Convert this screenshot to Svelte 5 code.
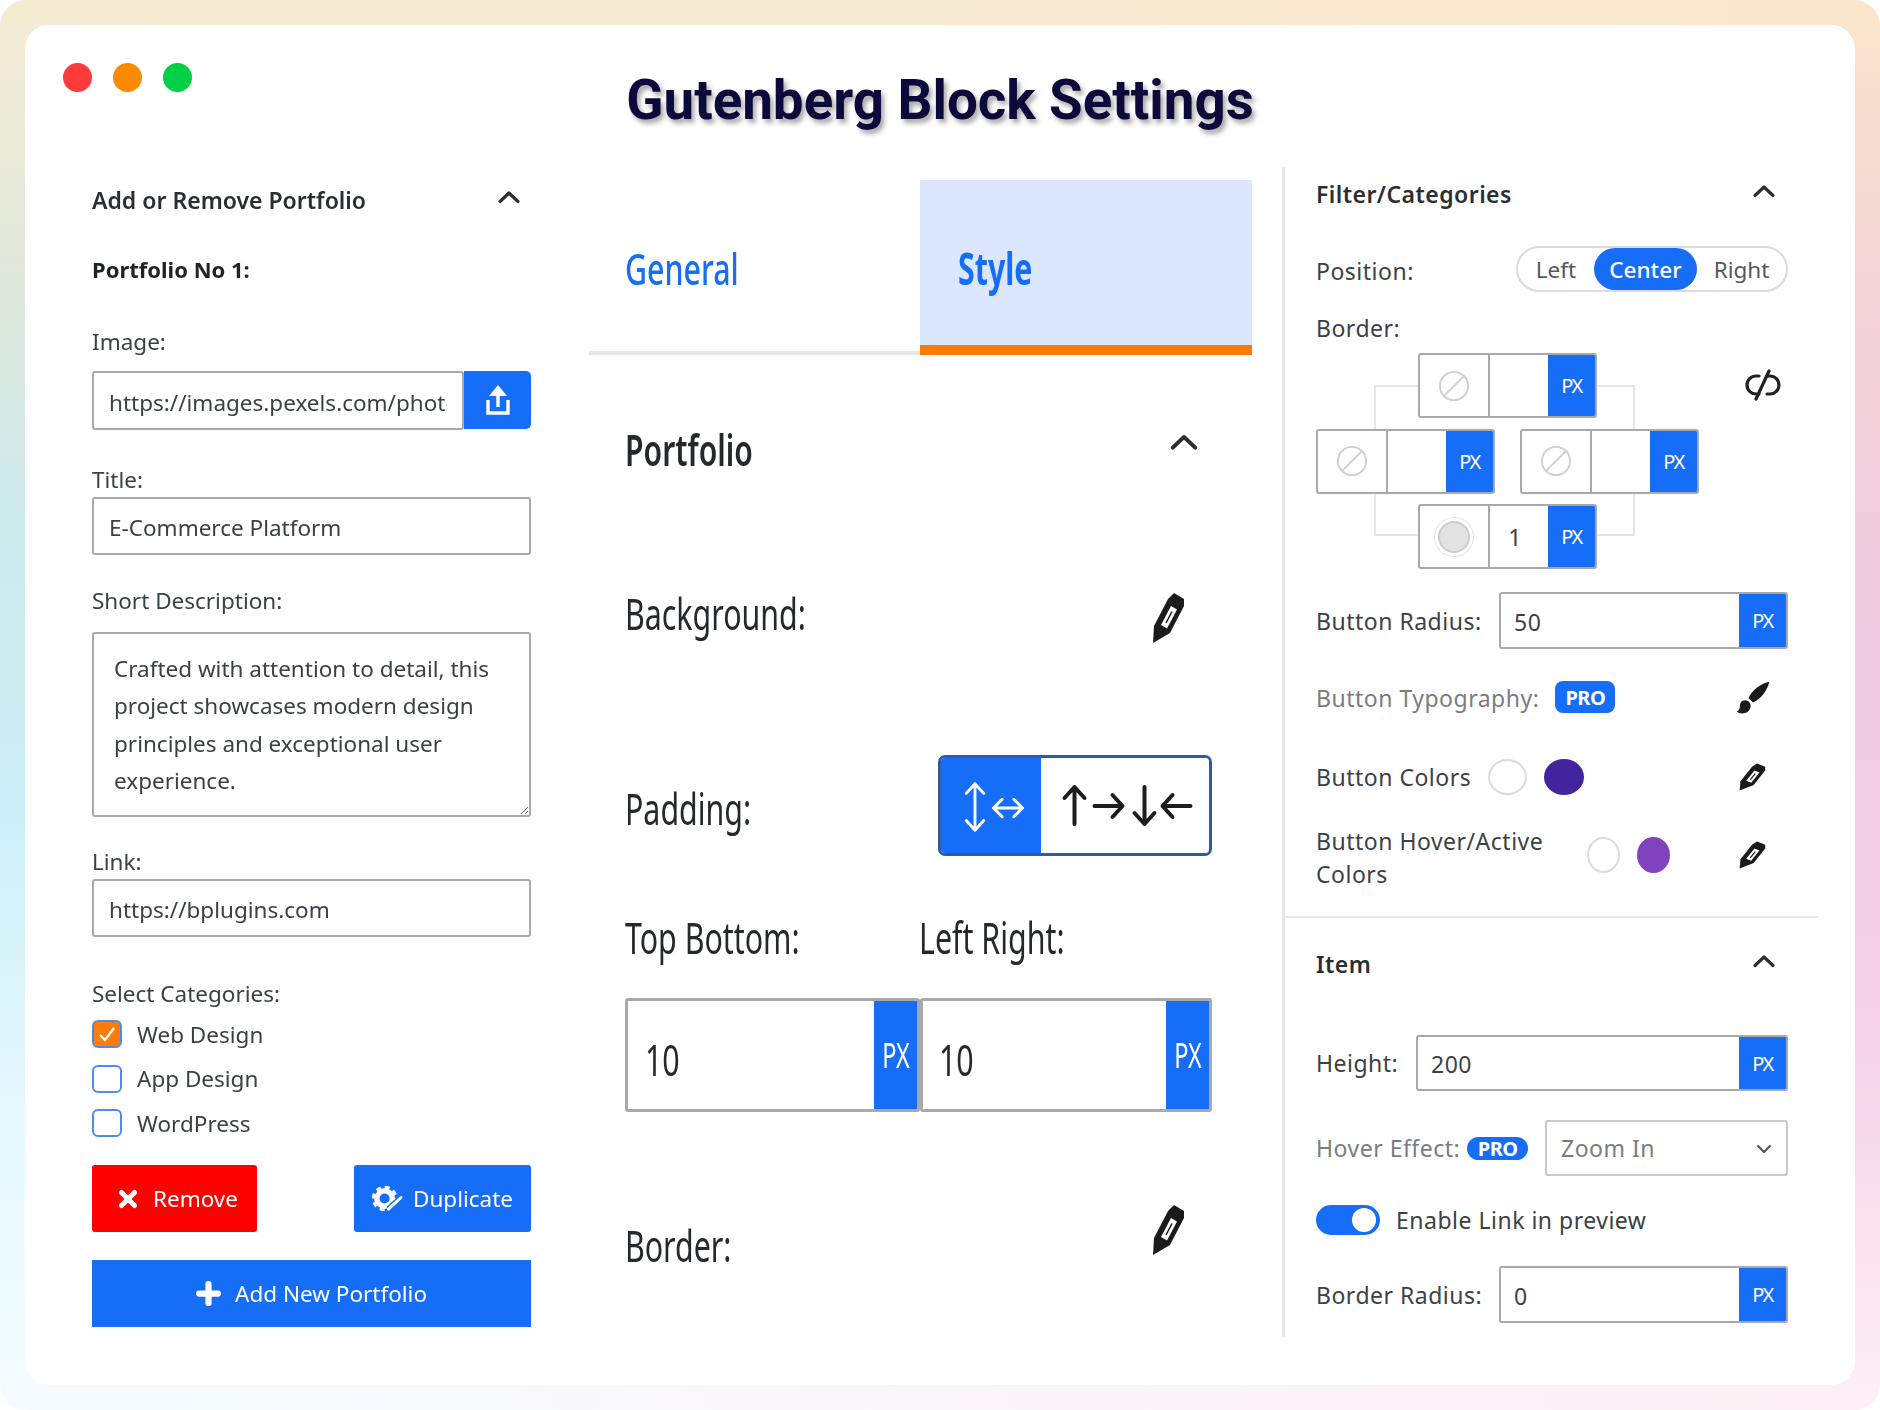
<script>
  const categories = [
    { name: 'Web Design', checked: true },
    { name: 'App Design', checked: false },
    { name: 'WordPress', checked: false }
  ];

  const description =
    'Crafted with attention to detail, this project showcases modern design principles and exceptional user experience.';
</script>

{#snippet chevron(cls)}
  <svg class={cls} viewBox="0 0 24 14" fill="none" stroke="currentColor" stroke-width="3.2" stroke-linecap="round" stroke-linejoin="round">
    <polyline points="3,11.5 12,3 21,11.5" />
  </svg>
{/snippet}

{#snippet pencil(cls)}
  <svg class={cls} viewBox="0 0 34 52" preserveAspectRatio="none">
    <path d="M2 51 L3 34 L17 7 L23 1 L33 7 L33 14 L19 41 Z" fill="#1b1b1b" />
    <path d="M10 33 L20 14 L26 17.500 L16 36.500 Z" fill="#fff" />
    <path d="M15 31 L21 19.500" stroke="#1b1b1b" stroke-width="1.500" />
  </svg>
{/snippet}

{#snippet unitInput(value, cls)}
  <div class="unit-input {cls}">
    <input type="text" {value} />
    <span class="unit">PX</span>
  </div>
{/snippet}

{#snippet borderSide(value, active)}
  <div class="side">
    <span class="side__swatch">
      {#if active}
        <span class="side__dot"></span>
      {:else}
        <svg viewBox="0 0 34 34" fill="none" stroke="#cfcfcf" stroke-width="2">
          <circle cx="17" cy="17" r="15" />
          <line x1="7" y1="27" x2="27" y2="7" />
        </svg>
      {/if}
    </span>
    <span class="side__value">{value}</span>
    <span class="side__unit">PX</span>
  </div>
{/snippet}

<div class="frame">
  <div class="card">
    <header class="titlebar">
      <div class="dots">
        <span class="dot dot--red"></span>
        <span class="dot dot--orange"></span>
        <span class="dot dot--green"></span>
      </div>
      <h1>Gutenberg Block Settings</h1>
    </header>

    <div class="columns">
      <section class="left">
        <div class="left__head">
          <h2>Add or Remove Portfolio</h2>
          {@render chevron('chev')}
        </div>
        <div class="left__sub">Portfolio No 1:</div>

        <label class="label label--image" for="image">Image:</label>
        <div class="image-row">
          <input id="image" type="text" value="https://images.pexels.com/photos/3184291" />
          <button class="upload" aria-label="Upload">
            <svg viewBox="0 0 26 32" fill="none" stroke="#fff" stroke-width="3.400">
              <path d="M13 3 L13 23" />
              <path d="M13 1 L22 12 L4 12 Z" fill="#fff" stroke="none" />
              <path d="M3 16 L3 29 L23 29 L23 16" />
            </svg>
          </button>
        </div>

        <label class="label label--title" for="title">Title:</label>
        <input id="title" class="text" type="text" value="E-Commerce Platform" />

        <label class="label label--desc" for="desc">Short Description:</label>
        <textarea id="desc" value={description}></textarea>

        <label class="label label--link" for="link">Link:</label>
        <input id="link" class="text" type="text" value="https://bplugins.com" />

        <div class="label label--cats">Select Categories:</div>
        <ul class="cats">
          {#each categories as cat}
            <li>
              <span class="check" class:check--on={cat.checked}>
                {#if cat.checked}
                  <svg viewBox="0 0 24 24" fill="none" stroke="#fff" stroke-width="2.400">
                    <polyline points="5,13 10,18 19,6" />
                  </svg>
                {/if}
              </span>
              {cat.name}
            </li>
          {/each}
        </ul>

        <div class="actions">
          <button class="btn btn--remove">
            <svg viewBox="0 0 20 20" stroke="#fff" stroke-width="5" stroke-linecap="round">
              <line x1="3.500" y1="3.500" x2="16.500" y2="16.500" />
              <line x1="16.500" y1="3.500" x2="3.500" y2="16.500" />
            </svg>
            Remove
          </button>
          <button class="btn btn--duplicate">
            <svg viewBox="0 0 32 30" fill="none" stroke="#fff">
              <circle cx="13" cy="15" r="8" stroke-width="5.500" />
              <circle cx="13" cy="15" r="11.500" stroke-width="3.500" stroke-dasharray="5 4" />
              <line x1="17" y1="26" x2="30" y2="14" stroke="#166df7" stroke-width="6" />
              <line x1="17" y1="26" x2="30" y2="14" stroke-width="3" stroke-linecap="round" />
            </svg>
            Duplicate
          </button>
        </div>

        <button class="btn btn--add">
          <svg viewBox="0 0 24 24" stroke="#fff" stroke-width="6" stroke-linecap="round">
            <line x1="12" y1="3" x2="12" y2="21" />
            <line x1="3" y1="12" x2="21" y2="12" />
          </svg>
          Add New Portfolio
        </button>
      </section>

      <section class="middle">
        <div class="tabs">
          <div class="tab"><span class="tall tall--tab">General</span></div>
          <div class="tab tab--active"><span class="tall tall--tab tall--bold">Style</span></div>
        </div>

        <div class="middle__body">
          <div class="mrow mrow--portfolio">
            <span class="tall tall--head">Portfolio</span>
            {@render chevron('chev chev--lg')}
          </div>

          <div class="mrow mrow--background">
            <span class="tall">Background:</span>
            {@render pencil('pencil pencil--lg pencil--down')}
          </div>

          <div class="mrow mrow--padding">
            <span class="tall tall--padding">Padding:</span>
            <div class="sides-toggle">
              <span class="sides-toggle__all">
                <svg viewBox="0 0 103 95" fill="none" stroke="#fff" stroke-width="3" stroke-linecap="round" stroke-linejoin="round">
                  <path d="M35 25 V73 M26 35 L35 25 L44 35 M26 63 L35 73 L44 63" />
                  <path d="M54 50 H84 M63 41 L54 50 L63 59 M75 41 L84 50 L75 59" />
                </svg>
              </span>
              <span class="sides-toggle__each">
                <svg viewBox="0 0 165 95" fill="none" stroke="#1d1d1d" stroke-width="4" stroke-linecap="round" stroke-linejoin="round">
                  <path d="M32 66 V29 M22 40 L32 29 L42 40" />
                  <path d="M52 48 H80 M70 37 L80 48 L70 59" />
                  <path d="M102 29 V66 M92 55 L102 66 L112 55" />
                  <path d="M148 48 H120 M130 37 L120 48 L130 59" />
                </svg>
              </span>
            </div>
          </div>

          <div class="pad-labels">
            <span class="tall">Top Bottom:</span>
            <span class="tall">Left Right:</span>
          </div>

          <div class="pad-inputs">
            <div class="pad-input">
              <span class="tall tall--value">10</span>
              <span class="pad-input__unit"><span class="tall tall--unit">PX</span></span>
            </div>
            <div class="pad-input">
              <span class="tall tall--value">10</span>
              <span class="pad-input__unit"><span class="tall tall--unit">PX</span></span>
            </div>
          </div>

          <div class="mrow mrow--border">
            <span class="tall">Border:</span>
            {@render pencil('pencil pencil--lg pencil--up')}
          </div>
        </div>
      </section>

      <section class="right">
        <div class="panel panel--filter">
          <div class="panel__head">
            <h2>Filter/Categories</h2>
            {@render chevron('chev')}
          </div>

          <div class="row row--position">
            <span class="row--position__label">Position:</span>
            <div class="pill">
              <span class="pill__item pill__item--left">Left</span>
              <span class="pill__item pill__item--center">Center</span>
              <span class="pill__item pill__item--right">Right</span>
            </div>
          </div>

          <div class="border-label">Border:</div>
          <div class="border-row">
            <div class="border-grid">
              <div class="border-grid__lines"></div>
              <div class="border-grid__row">{@render borderSide('', false)}</div>
              <div class="border-grid__row border-grid__row--split">
                {@render borderSide('', false)}
                {@render borderSide('', false)}
              </div>
              <div class="border-grid__row">{@render borderSide('1', true)}</div>
            </div>
            <svg class="unlink" viewBox="0 0 36 32" fill="none" stroke="#222" stroke-width="3.200" stroke-linecap="round">
              <path d="M14 7 H11 A9 9 0 0 0 11 25 H14" />
              <path d="M22 7 H25 A9 9 0 0 1 25 25 H22" />
              <line x1="11" y1="30" x2="24" y2="2" />
            </svg>
          </div>

          <div class="row row--radius">
            <span>Button Radius:</span>
            {@render unitInput('50', 'w-289')}
          </div>

          <div class="row row--typo">
            <span class="muted">Button Typography:</span>
            <span class="pro">PRO</span>
            <svg class="brush" viewBox="0 0 24 24" fill="#1b1b1b">
              <path d="M23.500 0.500 C18 1.500 11 6.500 8.800 12 L12 15.200 C17.500 13 22.500 6 23.500 0.500 Z" />
              <path d="M6.500 13.500 C3.800 13.500 2.800 15.500 2.800 17.500 C2.800 19.500 2 21 0.500 21.500 C3 23.800 9 23.500 10.300 18.500 C10.800 16 9 13.500 6.500 13.500 Z" />
            </svg>
          </div>

          <div class="row row--colors">
            <span>Button Colors</span>
            <span class="swatch swatch--white"></span>
            <span class="swatch swatch--indigo"></span>
            {@render pencil('pencil pencil--sm')}
          </div>

          <div class="row row--hover">
            <span class="row--hover__label">Button Hover/Active Colors</span>
            <span class="swatch swatch--white swatch--small"></span>
            <span class="swatch swatch--purple swatch--small"></span>
            {@render pencil('pencil pencil--sm')}
          </div>
        </div>

        <div class="panel panel--item">
          <div class="panel__head">
            <h2>Item</h2>
            {@render chevron('chev')}
          </div>

          <div class="row row--height">
            <span>Height:</span>
            {@render unitInput('200', 'w-372')}
          </div>

          <div class="row row--effect">
            <span class="muted">Hover Effect:</span>
            <span class="pro pro--round">PRO</span>
            <div class="select">
              <select>
                <option>Zoom In</option>
              </select>
              <svg viewBox="0 0 16 10" fill="none" stroke="#555" stroke-width="2.200" stroke-linecap="round" stroke-linejoin="round">
                <polyline points="2,2 8,8 14,2" />
              </svg>
            </div>
          </div>

          <div class="row row--switch">
            <span class="switch"><span class="switch__knob"></span></span>
            <span>Enable Link in preview</span>
          </div>

          <div class="row row--bradius">
            <span>Border Radius:</span>
            {@render unitInput('0', 'w-289')}
          </div>
        </div>
      </section>
    </div>
  </div>
</div>

<style>
  :global(body) {
    margin: 0;
    background: #fff;
  }

  .frame {
    width: 1880px;
    height: 1410px;
    box-sizing: border-box;
    padding: 25px;
    border-radius: 26px;
    font-family: "Noto Sans", "Open Sans", sans-serif;
    font-size: 22.5px;
    color: #3c4146;
    background-color: #f4f0f0;
    background-image:
      linear-gradient(90deg, #f4ebd3, #f6e9d2 50%, #fbe6cd),
      linear-gradient(90deg, #f4fcff, #fbf6fa 50%, #fdeff5),
      linear-gradient(180deg, #f4ebd3 0%, #dfe9de 22%, #cdeaec 36%, #cdf0f8 58%, #e6f9fe 80%, #f4fcff 100%),
      linear-gradient(180deg, #fbe6cd 0%, #f2d3d8 22%, #f0cce0 44%, #f4d0e6 70%, #fdeff5 100%);
    background-size: 100% 25px, 100% 25px, 50% 100%, 50% 100%;
    background-position: top, bottom, left, right;
    background-repeat: no-repeat;
  }

  .card {
    height: 100%;
    box-sizing: border-box;
    background: #fff;
    border-radius: 24px;
    padding: 0 37px 0 67px;
  }

  .titlebar {
    height: 142px;
    display: grid;
    grid-template-columns: 1fr auto 1fr;
    margin-left: -67px;
    margin-right: -37px;
  }

  .dots {
    display: flex;
    gap: 21px;
    padding: 38px 0 0 38px;
  }

  .dot {
    width: 29px;
    height: 29px;
    border-radius: 50%;
  }

  .dot--red { background: #ff3b3b; }
  .dot--orange { background: #ff8a00; }
  .dot--green { background: #00cf47; }

  h1 {
    margin: 40px 0 0;
    font-family: Roboto, sans-serif;
    font-size: 54.700px;
    line-height: 70px;
    font-weight: 700;
    color: #0b0a3a;
    text-shadow: 3px 4px 5px rgba(0, 0, 0, 0.35);
    white-space: nowrap;
  }

  h2 {
    margin: 0;
    font-size: 23px;
    font-weight: 600;
    color: #2b2f33;
  }

  .columns {
    display: grid;
    grid-template-columns: 439px 663px 535px;
    column-gap: 58px;
  }

  .chev {
    width: 24px;
    height: 14px;
    color: #2b2f33;
  }

  /* left column */
  .left__head {
    height: 66px;
    display: flex;
    align-items: center;
    justify-content: space-between;
    padding: 0 10px 0 0;
  }

  .left__head .chev {
    margin-bottom: 7px;
  }

  .left__sub {
    margin-top: 21px;
    margin-bottom: 1px;
    line-height: 30px;
    font-size: 22px;
    font-weight: 700;
    color: #1f2326;
  }

  .label {
    display: block;
    line-height: 30px;
  }

  .label--image { margin-top: 43px; margin-bottom: 14px; }
  .label--title { margin-top: 35px; margin-bottom: 2px; }
  .label--desc { margin-top: 31px; margin-bottom: 16px; }
  .label--link { margin-top: 30px; margin-bottom: 2px; }
  .label--cats { margin-top: 42px; margin-bottom: 3px; }

  input,
  textarea,
  select {
    font-family: inherit;
    font-size: inherit;
    letter-spacing: inherit;
    color: #3c4146;
    outline: none;
    background: #fff;
  }

  .text {
    width: 100%;
    height: 58px;
    box-sizing: border-box;
    padding: 3px 15px 0;
    border: 2px solid #a9a9a9;
    border-radius: 3px;
  }

  .image-row {
    display: flex;
    height: 59px;
  }

  .image-row input {
    width: 372px;
    box-sizing: border-box;
    padding: 3px 15px 0;
    border: 2px solid #a9a9a9;
    border-radius: 3px;
  }

  .upload {
    width: 67px;
    height: 58px;
    border: 0;
    padding: 0;
    border-radius: 0 5px 5px 0;
    background: #166df7;
    display: flex;
    align-items: center;
    justify-content: center;
  }

  .upload svg {
    width: 26px;
    height: 32px;
  }

  textarea {
    display: block;
    width: 100%;
    height: 185px;
    box-sizing: border-box;
    padding: 16px 20px;
    line-height: 37.4px;
    border: 2px solid #a9a9a9;
    border-radius: 3px;
  }

  .cats {
    list-style: none;
    margin: 0;
    padding: 0;
  }

  .cats li {
    height: 44.5px;
    display: flex;
    align-items: center;
    gap: 15px;
  }

  .check {
    width: 30px;
    height: 28px;
    box-sizing: border-box;
    border: 2px solid #4d8bf0;
    border-radius: 6px;
    background: #fff;
  }

  .check svg {
    display: block;
    width: 100%;
    height: 100%;
  }

  .check--on {
    background: #ff7c0a;
  }

  .actions {
    margin-top: 19.500px;
    display: flex;
    justify-content: space-between;
  }

  .btn {
    height: 67px;
    border: 0;
    border-radius: 3px;
    padding: 0;
    font-family: inherit;
    font-size: inherit;
    color: #fff;
    display: flex;
    align-items: center;
    justify-content: center;
  }

  .btn--remove {
    width: 165px;
    gap: 15px;
    padding-left: 7px;
    background: #ff0000;
  }

  .btn--remove svg {
    width: 20px;
    height: 20px;
  }

  .btn--duplicate {
    width: 177px;
    gap: 10px;
    background: #166df7;
  }

  .btn--duplicate svg {
    width: 31px;
    height: 29px;
  }

  .btn--add {
    width: 100%;
    height: 67px;
    margin-top: 28px;
    gap: 14px;
    border-radius: 0;
    background: #166df7;
  }

  .btn--add svg {
    width: 25px;
    height: 25px;
  }

  /* middle column, the source is a stretched screenshot so its text runs narrow */
  .middle {
    padding-top: 13px;
  }

  .tall {
    display: inline-block;
    font-size: 44px;
    line-height: 60px;
    color: #26292c;
    white-space: nowrap;
    transform: scaleX(0.69);
    transform-origin: left center;
  }

  .tall--tab {
    color: #166df7;
    font-weight: 500;
  }

  .tall--bold {
    font-weight: 700;
  }

  .tall--head {
    font-weight: 600;
    transform: scaleX(0.685);
  }

  .tall--padding {
    margin-top: 4px;
  }

  .tall--value {
    font-size: 44px;
  }

  .tall--unit {
    font-size: 34px;
    color: #fff;
    transform-origin: center;
  }

  .tabs {
    display: grid;
    grid-template-columns: 331px 332px;
    height: 175px;
  }

  .tab {
    box-sizing: border-box;
    padding: 58px 0 0 36px;
    border-bottom: 4px solid #e6e6e6;
  }

  .tab--active {
    padding-left: 38px;
    background: #dbe7fd;
    border-bottom: 10px solid #ff7c00;
  }

  .middle__body {
    padding: 0 40px 0 36px;
  }

  .mrow {
    height: 60px;
    display: flex;
    align-items: center;
    justify-content: space-between;
  }

  .mrow--portfolio { margin-top: 64px; padding-right: 13px; }
  .mrow--background { margin-top: 104px; padding-right: 27px; }
  .mrow--padding { margin-top: 112px; height: 101px; }
  .mrow--border { margin-top: 103px; padding-right: 27px; }

  .chev--lg {
    width: 30px;
    height: 18px;
    margin-bottom: 14px;
  }

  .pencil--lg {
    width: 34px;
    height: 52px;
  }

  .pencil--down { margin-top: 10px; }
  .pencil--up { margin-bottom: 30px; }

  .pencil--sm {
    width: 28px;
    height: 28px;
  }

  .sides-toggle {
    width: 274px;
    height: 101px;
    box-sizing: border-box;
    display: flex;
    border: 3px solid #2b5da6;
    border-radius: 7px;
    overflow: hidden;
  }

  .sides-toggle__all {
    width: 100px;
    background: #166df7;
  }

  .sides-toggle__each {
    flex: 1;
    background: #fff;
  }

  .sides-toggle svg {
    display: block;
    width: 100%;
    height: 100%;
  }

  .pad-labels {
    margin-top: 51px;
    display: grid;
    grid-template-columns: 294px 1fr;
  }

  .pad-inputs {
    margin-top: 31px;
    display: grid;
    grid-template-columns: 295px 292px;
    height: 114px;
  }

  .pad-input {
    box-sizing: border-box;
    display: flex;
    justify-content: space-between;
    align-items: center;
    padding-left: 17px;
    border: 3px solid #a9a9a9;
    border-radius: 3px;
  }

  .pad-input + .pad-input {
    padding-left: 16px;
  }

  .pad-input .tall--value {
    margin-top: 7px;
  }

  .pad-input__unit {
    width: 43px;
    height: 100%;
    display: flex;
    align-items: center;
    justify-content: center;
    background: #166df7;
  }

  /* right column */
  .right {
    border-left: 3px solid #e8e8e8;
    height: 1170px;
    margin-left: -28px;
    width: 536px;
    box-sizing: border-box;
    font-size: 23px;
    letter-spacing: 0.5px;
  }

  .panel {
    padding: 0 30px 0 31px;
  }

  .panel--filter {
    padding-top: 12px;
    padding-bottom: 25px;
    border-bottom: 2px solid #e8e8e8;
  }

  .panel--item {
    padding-top: 31px;
  }

  .panel__head {
    height: 30px;
    display: flex;
    align-items: center;
    justify-content: space-between;
    padding-right: 12px;
  }

  .panel__head h2 {
    font-size: 23px;
    letter-spacing: 0.45px;
  }

  .panel__head .chev {
    margin-bottom: 7px;
  }

  .row {
    display: flex;
    align-items: center;
    justify-content: space-between;
  }

  .row--position { margin-top: 37px; height: 46px; }

  .row--position__label {
    padding-top: 3px;
  }

  .pill {
    width: 272px;
    height: 46px;
    box-sizing: border-box;
    display: flex;
    border: 2px solid #dcdcdc;
    border-radius: 23px;
    font-size: 22.5px;
    letter-spacing: 0;
  }

  .pill__item {
    display: flex;
    align-items: center;
    justify-content: center;
    border-radius: 21px;
    color: #55595d;
  }

  .pill__item--left { width: 76px; }
  .pill__item--center { width: 103px; background: #166df7; color: #fff; font-weight: 500; }
  .pill__item--right { width: 89px; }

  .border-label {
    margin-top: 21px;
    line-height: 30px;
  }

  .border-row {
    margin-top: 10px;
    display: flex;
    justify-content: space-between;
    align-items: flex-start;
    padding-right: 7px;
  }

  .border-grid {
    position: relative;
    width: 383px;
    height: 216px;
    display: flex;
    flex-direction: column;
    justify-content: space-between;
  }

  .border-grid__lines {
    position: absolute;
    left: 58px;
    right: 64px;
    top: 32px;
    bottom: 33px;
    border: 2px solid #e6e6e6;
  }

  .border-grid__row {
    position: relative;
    display: flex;
    justify-content: center;
  }

  .border-grid__row--split {
    justify-content: space-between;
  }

  .side {
    width: 179px;
    height: 65px;
    box-sizing: border-box;
    display: flex;
    background: #fff;
    border: 2px solid #a9a9a9;
    border-radius: 3px;
    overflow: hidden;
  }

  .side__swatch {
    width: 70px;
    box-sizing: border-box;
    display: flex;
    align-items: center;
    justify-content: center;
    border-right: 2px solid #a9a9a9;
  }

  .side__swatch svg {
    width: 32px;
    height: 32px;
  }

  .side__dot {
    width: 28px;
    height: 28px;
    border-radius: 50%;
    background: #e3e3e3;
    border: 2px solid #ccc;
    box-shadow: 0 0 0 3px #fff, 0 0 0 4px #e4e4e4;
  }

  .side__value {
    flex: 1;
    display: flex;
    align-items: center;
    justify-content: center;
    padding-right: 8px;
  }

  .side__unit {
    width: 47px;
    display: flex;
    align-items: center;
    justify-content: center;
    background: #166df7;
    color: #fff;
    font-size: 20px;
    letter-spacing: -1.5px;
  }

  .unlink {
    width: 36px;
    height: 32px;
    margin-top: 16px;
  }

  .row--radius { margin-top: 23px; }

  .unit-input {
    height: 57px;
    box-sizing: border-box;
    display: flex;
    border: 2px solid #a9a9a9;
    border-radius: 3px;
    overflow: hidden;
  }

  .w-289 { width: 289px; }
  .w-372 { width: 372px; }

  .unit-input input {
    flex: 1;
    min-width: 0;
    border: 0;
    padding: 2px 13px 0;
  }

  .unit {
    width: 47px;
    display: flex;
    align-items: center;
    justify-content: center;
    background: #166df7;
    color: #fff;
    font-size: 20px;
    letter-spacing: -1.5px;
  }

  .muted {
    color: #7a7d80;
  }

  .row--typo {
    margin-top: 29px;
    height: 40px;
    justify-content: flex-start;
  }

  .pro {
    margin-left: 16px;
    margin-bottom: 2px;
    width: 60px;
    height: 32px;
    display: flex;
    align-items: center;
    justify-content: center;
    border-radius: 8px;
    background: #166df7;
    color: #fff;
    font-size: 20px;
    font-weight: 700;
    letter-spacing: -0.5px;
  }

  .brush {
    width: 34px;
    height: 34px;
    margin-left: auto;
    margin-right: 18px;
  }

  .row--colors {
    margin-top: 39px;
    height: 40px;
    justify-content: flex-start;
  }

  .swatch {
    flex: none;
    width: 39px;
    height: 36px;
    box-sizing: border-box;
    border-radius: 50%;
    margin-left: 17px;
  }

  .row--colors .pencil {
    margin-left: auto;
    margin-right: 22px;
  }

  .swatch--white {
    background: #fff;
    border: 2px solid #dcdcdc;
  }

  .swatch--indigo {
    background: #42259e;
    width: 40px;
    height: 36px;
  }

  .row--hover {
    margin-top: 28px;
    height: 66px;
    justify-content: flex-start;
  }

  .row--hover__label {
    width: 254px;
    line-height: 33px;
  }

  .swatch--small {
    width: 33px;
    height: 36px;
    margin-bottom: 6px;
  }

  .swatch--purple {
    background: #8042bd;
  }

  .row--hover .pencil {
    margin-left: auto;
    margin-right: 22px;
    margin-bottom: 6px;
  }

  .row--height { margin-top: 56px; }
  .row--height .unit-input { height: 56px; }

  .row--effect {
    margin-top: 29px;
    justify-content: flex-start;
  }

  .pro--round {
    margin-left: 7px;
    margin-bottom: 0;
    width: 61px;
    height: 23px;
    border-radius: 12px;
  }

  .select {
    position: relative;
    margin-left: auto;
    width: 243px;
    height: 56px;
  }

  .select select {
    width: 100%;
    height: 100%;
    box-sizing: border-box;
    padding: 0 14px;
    border: 2px solid #c9c9c9;
    border-radius: 3px;
    appearance: none;
    color: #7a7d80;
  }

  .select svg {
    position: absolute;
    right: 16px;
    top: 24px;
    width: 16px;
    height: 10px;
  }

  .row--switch {
    margin-top: 29px;
    height: 30px;
    justify-content: flex-start;
    gap: 16px;
  }

  .switch {
    width: 64px;
    height: 30px;
    border-radius: 15px;
    background: #166df7;
    display: flex;
    align-items: center;
    justify-content: flex-end;
    padding-right: 4px;
    box-sizing: border-box;
  }

  .switch__knob {
    width: 24px;
    height: 24px;
    border-radius: 50%;
    background: #fff;
  }

  .row--bradius { margin-top: 31px; }
</style>
